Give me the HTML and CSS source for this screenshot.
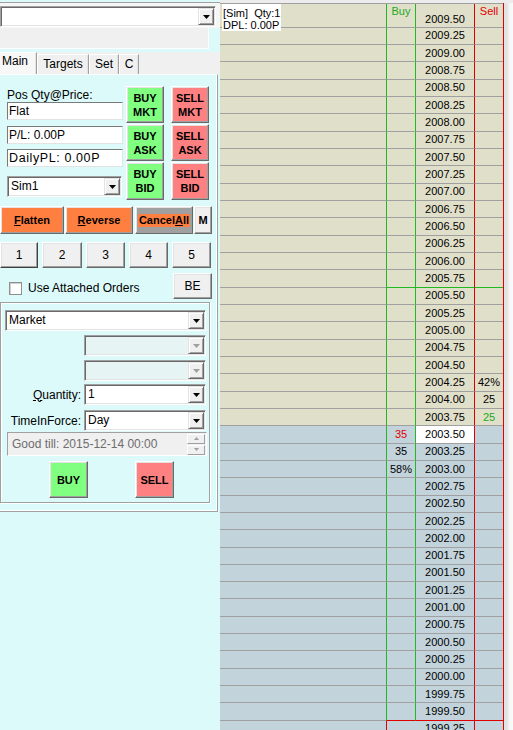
FILE: index.html
```html
<!DOCTYPE html>
<html>
<head>
<meta charset="utf-8">
<title>DOM</title>
<link rel="stylesheet" href="styles.css">
</head>
<body>
<div class="app">
  <div class="left">
    <div class="topbar">
      <div class="combo topcombo"><span class="val"></span><span class="arrow"><svg width="7" height="4" viewBox="0 0 7 4"><path d="M0 0h7L3.5 4z"/></svg></span></div>
    </div>
    <div class="greybox"></div>
    <div class="tabs">
      <div class="tab sel">Main</div>
      <div class="tab t2">Targets</div>
      <div class="tab t3">Set</div>
      <div class="tab t4">C</div>
    </div>
    <div class="page">
      <div class="sec1">
        <div class="poscol">
          <div class="lbl">Pos Qty@Price:</div>
          <div class="tb">Flat</div>
          <div class="tb mt6">P/L: 0.00P</div>
          <div class="tb mt5 wide">DailyPL: 0.00P</div>
          <div class="combo sim"><span class="val">Sim1</span><span class="arrow"><svg width="7" height="4" viewBox="0 0 7 4"><path d="M0 0h7L3.5 4z"/></svg></span></div>
        </div>
        <div class="btncol c1">
          <div class="btn buy h37">BUY<br>MKT</div>
          <div class="btn buy h37">BUY<br>ASK</div>
          <div class="btn buy h38">BUY<br>BID</div>
        </div>
        <div class="btncol c2">
          <div class="btn sell h37">SELL<br>MKT</div>
          <div class="btn sell h37">SELL<br>ASK</div>
          <div class="btn sell h38">SELL<br>BID</div>
        </div>
      </div>
      <div class="actrow">
        <div class="btn orange flat"><span><u>F</u>latten</span></div>
        <div class="btn orange rev"><span><u>R</u>everse</span></div>
        <div class="btn grey cancel"><span class="hl">Cancel<u>A</u>ll</span></div>
        <div class="btn face mbtn">M</div>
      </div>
      <div class="numrow">
        <div class="btn face num n1 def">1</div>
        <div class="btn face num n2">2</div>
        <div class="btn face num n3">3</div>
        <div class="btn face num n4">4</div>
        <div class="btn face num n5">5</div>
      </div>
      <div class="attrow">
        <span class="chk"></span>
        <span class="chklbl">Use Attached Orders</span>
        <div class="btn face be">BE</div>
      </div>
      <div class="group">
        <div class="combo market"><span class="val">Market</span><span class="arrow"><svg width="7" height="4" viewBox="0 0 7 4"><path d="M0 0h7L3.5 4z"/></svg></span></div>
        <div class="combo dis sub mt4"><span class="val"></span><span class="arrow"><svg width="7" height="4" viewBox="0 0 7 4"><path d="M0 0h7L3.5 4z"/></svg></span></div>
        <div class="combo dis sub mt4"><span class="val"></span><span class="arrow"><svg width="7" height="4" viewBox="0 0 7 4"><path d="M0 0h7L3.5 4z"/></svg></span></div>
        <div class="frow mt3">
          <span class="flbl"><u>Q</u>uantity:</span>
          <div class="combo fcombo"><span class="val">1</span><span class="arrow"><svg width="7" height="4" viewBox="0 0 7 4"><path d="M0 0h7L3.5 4z"/></svg></span></div>
        </div>
        <div class="frow mt5">
          <span class="flbl">TimeInForce:</span>
          <div class="combo fcombo"><span class="val">Day</span><span class="arrow"><svg width="7" height="4" viewBox="0 0 7 4"><path d="M0 0h7L3.5 4z"/></svg></span></div>
        </div>
        <div class="goodtill">
          <span class="gtxt">Good till: 2015-12-14 00:00</span>
          <span class="spin">
            <span class="sp"><svg width="5" height="3" viewBox="0 0 5 3"><path d="M0 3h5L2.5 0z"/></svg></span>
            <span class="sp"><svg width="5" height="3" viewBox="0 0 5 3"><path d="M0 0h5L2.5 3z"/></svg></span>
          </span>
        </div>
        <div class="orow">
          <div class="btn buy obuy">BUY</div>
          <div class="btn sell osell">SELL</div>
        </div>
      </div>
    </div>
  </div>

  <div class="ladder">
    <div class="grid">
      <div class="row hdr"><span class="c l"></span><span class="c b"><span class="hb">Buy</span></span><span class="c p">2009.50</span><span class="c s"><span class="hs">Sell</span></span></div>
      <div class="row"><span class="c l"></span><span class="c b"></span><span class="c p">2009.25</span><span class="c s"></span></div>
      <div class="row"><span class="c l"></span><span class="c b"></span><span class="c p">2009.00</span><span class="c s"></span></div>
      <div class="row"><span class="c l"></span><span class="c b"></span><span class="c p">2008.75</span><span class="c s"></span></div>
      <div class="row"><span class="c l"></span><span class="c b"></span><span class="c p">2008.50</span><span class="c s"></span></div>
      <div class="row"><span class="c l"></span><span class="c b"></span><span class="c p">2008.25</span><span class="c s"></span></div>
      <div class="row"><span class="c l"></span><span class="c b"></span><span class="c p">2008.00</span><span class="c s"></span></div>
      <div class="row"><span class="c l"></span><span class="c b"></span><span class="c p">2007.75</span><span class="c s"></span></div>
      <div class="row"><span class="c l"></span><span class="c b"></span><span class="c p">2007.50</span><span class="c s"></span></div>
      <div class="row"><span class="c l"></span><span class="c b"></span><span class="c p">2007.25</span><span class="c s"></span></div>
      <div class="row"><span class="c l"></span><span class="c b"></span><span class="c p">2007.00</span><span class="c s"></span></div>
      <div class="row"><span class="c l"></span><span class="c b"></span><span class="c p">2006.75</span><span class="c s"></span></div>
      <div class="row"><span class="c l"></span><span class="c b"></span><span class="c p">2006.50</span><span class="c s"></span></div>
      <div class="row"><span class="c l"></span><span class="c b"></span><span class="c p">2006.25</span><span class="c s"></span></div>
      <div class="row"><span class="c l"></span><span class="c b"></span><span class="c p">2006.00</span><span class="c s"></span></div>
      <div class="row gline"><span class="c l"></span><span class="c b"></span><span class="c p">2005.75</span><span class="c s"></span></div>
      <div class="row"><span class="c l"></span><span class="c b"></span><span class="c p">2005.50</span><span class="c s"></span></div>
      <div class="row"><span class="c l"></span><span class="c b"></span><span class="c p">2005.25</span><span class="c s"></span></div>
      <div class="row"><span class="c l"></span><span class="c b"></span><span class="c p">2005.00</span><span class="c s"></span></div>
      <div class="row"><span class="c l"></span><span class="c b"></span><span class="c p">2004.75</span><span class="c s"></span></div>
      <div class="row"><span class="c l"></span><span class="c b"></span><span class="c p">2004.50</span><span class="c s"></span></div>
      <div class="row"><span class="c l"></span><span class="c b"></span><span class="c p">2004.25</span><span class="c s">42%</span></div>
      <div class="row"><span class="c l"></span><span class="c b"></span><span class="c p">2004.00</span><span class="c s">25</span></div>
      <div class="row"><span class="c l"></span><span class="c b"></span><span class="c p">2003.75</span><span class="c s green">25</span></div>
      <div class="row lo"><span class="c l"></span><span class="c b red">35</span><span class="c p cur">2003.50</span><span class="c s"></span></div>
      <div class="row lo"><span class="c l"></span><span class="c b">35</span><span class="c p">2003.25</span><span class="c s"></span></div>
      <div class="row lo"><span class="c l"></span><span class="c b">58%</span><span class="c p">2003.00</span><span class="c s"></span></div>
      <div class="row lo"><span class="c l"></span><span class="c b"></span><span class="c p">2002.75</span><span class="c s"></span></div>
      <div class="row lo"><span class="c l"></span><span class="c b"></span><span class="c p">2002.50</span><span class="c s"></span></div>
      <div class="row lo"><span class="c l"></span><span class="c b"></span><span class="c p">2002.25</span><span class="c s"></span></div>
      <div class="row lo"><span class="c l"></span><span class="c b"></span><span class="c p">2002.00</span><span class="c s"></span></div>
      <div class="row lo"><span class="c l"></span><span class="c b"></span><span class="c p">2001.75</span><span class="c s"></span></div>
      <div class="row lo"><span class="c l"></span><span class="c b"></span><span class="c p">2001.50</span><span class="c s"></span></div>
      <div class="row lo"><span class="c l"></span><span class="c b"></span><span class="c p">2001.25</span><span class="c s"></span></div>
      <div class="row lo"><span class="c l"></span><span class="c b"></span><span class="c p">2001.00</span><span class="c s"></span></div>
      <div class="row lo"><span class="c l"></span><span class="c b"></span><span class="c p">2000.75</span><span class="c s"></span></div>
      <div class="row lo"><span class="c l"></span><span class="c b"></span><span class="c p">2000.50</span><span class="c s"></span></div>
      <div class="row lo"><span class="c l"></span><span class="c b"></span><span class="c p">2000.25</span><span class="c s"></span></div>
      <div class="row lo"><span class="c l"></span><span class="c b"></span><span class="c p">2000.00</span><span class="c s"></span></div>
      <div class="row lo"><span class="c l"></span><span class="c b"></span><span class="c p">1999.75</span><span class="c s"></span></div>
      <div class="row lo rline"><span class="c l"></span><span class="c b"></span><span class="c p">1999.50</span><span class="c s"></span></div>
      <div class="row lo after"><span class="c l"></span><span class="c b"></span><span class="c p">1999.25</span><span class="c s"></span></div>
    </div>
    <div class="strip"></div>
    <div class="info">[Sim]  Qty:1<br>DPL: 0.00P</div>
  </div>
</div>
</body>
</html>
```

FILE: styles.css
```css
* { box-sizing: border-box; }
html, body { margin: 0; padding: 0; }
body {
  width: 513px;
  height: 730px;
  overflow: hidden;
  background: #f0f0f0;
  font-family: "Liberation Sans", Arial, sans-serif;
  font-size: 12px;
  color: #000;
}
.app { display: flex; height: 730px; }

/* ---------- left panel ---------- */
.left {
  width: 220px;
  flex: none;
  background: #dcfafa;
  display: flex;
  flex-direction: column;
}
.topbar {
  height: 26px;
  margin-top: 2px;
  border-top: 1px solid #a0a0a0;
  background: #f6f6f6;
  padding-top: 3px;
}
.combo {
  display: flex;
  height: 21px;
  background: #fff;
  border: 1px solid;
  border-color: #a0a0a0 #fff #fff #a0a0a0;
  box-shadow: inset 1px 1px 0 #696969, inset -1px -1px 0 #e3e3e3;
}
.combo .val {
  flex: 1;
  padding-left: 3px;
  line-height: 19px;
  white-space: nowrap;
}
.combo .arrow {
  width: 16px;
  margin: 1px 1px 1px 0;
  background: #f0f0f0;
  border: 1px solid;
  border-color: #e3e3e3 #696969 #696969 #e3e3e3;
  box-shadow: inset 1px 1px 0 #fff, inset -1px -1px 0 #a0a0a0;
  display: flex;
  align-items: center;
  justify-content: center;
}
.combo .arrow svg { fill: #000; display: block; }
.combo.dis { background: #e6f4f4; }
.combo.dis .arrow svg { fill: #a0a0a0; }
.topcombo { width: 216px; }

.greybox {
  width: 209px;
  height: 21px;
  background: #f0f0f0;
  border-right: 1px solid #fff;
  border-bottom: 1px solid #fff;
}
.tabs {
  margin-top: 3px;
  height: 22px;
  background: #f0f0f0;
  display: flex;
  align-items: flex-end;
}
.tab {
  height: 20px;
  line-height: 17px;
  padding-top: 1px;
  border-left: 1px solid #fff;
  border-top: 1px solid #fff;
  border-right: 1px solid #a0a0a0;
  box-shadow: inset -1px 0 0 #e3e3e3;
  text-align: center;
  white-space: nowrap;
}
.tab.sel {
  height: 22px;
  width: 37px;
  padding-top: 0;
  line-height: 17px;
  padding-left: 2px;
  text-align: left;
  border-left: none;
  background: #f7f7f7;
}
.tab.t2 { width: 52px; }
.tab.t3 { width: 30px; }
.tab.t4 { width: 20px; }

.page {
  width: 218px;
  height: 438px;
  border-top: 1px solid #fff;
  border-right: 1px solid #a0a0a0;
  border-bottom: 1px solid #a0a0a0;
  box-shadow: inset -1px -1px 0 #fff;
  background: #dcfafa;
  padding-top: 11px;
}

.sec1 { display: flex; height: 114px; }
.poscol { width: 116px; margin-left: 7px; display: flex; flex-direction: column; }
.lbl { height: 16px; line-height: 14px; padding-top: 2px; white-space: nowrap; }
.tb {
  height: 18px;
  background: #fff;
  border: 1px solid;
  border-color: #7a7a7a #e3e3e3 #e3e3e3 #7a7a7a;
  line-height: 16px;
  padding-left: 1px;
  white-space: nowrap;
  overflow: hidden;
}
.tb.wide { letter-spacing: 0.6px; font-size: 12.5px; }
.mt6 { margin-top: 6px; }
.mt5 { margin-top: 5px; }
.mt4 { margin-top: 4px; }
.mt3 { margin-top: 3px; }
.sim { width: 115px; margin-top: 9px; }

.btncol { width: 38px; display: flex; flex-direction: column; gap: 1px; }
.btncol.c1 { margin-left: 3px; }
.btncol.c2 { margin-left: 7px; }
.h37 { height: 37px; }
.h38 { height: 38px; }

.btn {
  border: 1px solid;
  border-color: #fff #696969 #696969 #fff;
  box-shadow: inset -1px -1px 0 #a0a0a0, inset 1px 1px 0 #e3e3e3;
  display: flex;
  align-items: center;
  justify-content: center;
  text-align: center;
  white-space: nowrap;
}
.buy, .sell, .orange, .grey, .mbtn {
  font-weight: bold;
  font-size: 11px;
  line-height: 14px;
}
.buy { background: #80ff80; }
.sell { background: #ff8080; }
.orange { background: #ff7f40; }
.grey { background: #a0a0a0; }
.face { background: #f0f0f0; }
.hl { background: #ff7f40; padding: 0 1px; line-height: 13px; }

.actrow { display: flex; height: 28px; margin-top: 6px; }
.flat { width: 64px; }
.rev { width: 68px; margin-left: 1px; }
.cancel { width: 58px; margin-left: 2px; }
.mbtn { width: 18px; margin-left: 1px; }

.numrow { display: flex; height: 26px; margin-top: 8px; gap: 4px; }
.num { width: 39px; }
.n1 { width: 38px; }
.n2 { width: 40px; }
.def { border-color: #fff #404040 #404040 #fff; }

.attrow { display: flex; align-items: center; height: 26px; margin-top: 5px; }
.chk {
  width: 13px;
  height: 13px;
  margin-left: 9px;
  margin-top: 4px;
  background: #fff;
  border: 1px solid #8e8f8f;
  box-shadow: inset 1px 1px 0 #d0d0d0;
}
.chklbl { margin-left: 6px; margin-top: 3px; }
.be { width: 39px; height: 26px; margin-left: auto; margin-right: 5px; }

.group {
  width: 210px;
  height: 201px;
  margin-top: 3px;
  border: 1px solid #a0a0a0;
  box-shadow: 1px 1px 0 #fff, inset 1px 1px 0 #fff;
  padding: 7px 0 0 4px;
}
.market { width: 201px; }
.sub { width: 122px; margin-left: 79px; }
.frow { display: flex; align-items: center; }
.flbl { width: 76px; text-align: right; margin-right: 3px; white-space: nowrap; }
.fcombo { width: 122px; }
.goodtill {
  width: 200px;
  height: 24px;
  margin: 1px 0 0 2px;
  background: #f0f0f0;
  border: 1px solid;
  border-color: #a0a0a0 #fff #fff #a0a0a0;
  display: flex;
  align-items: center;
}
.gtxt { flex: 1; color: #6d6d6d; padding-left: 4px; white-space: nowrap; }
.spin { width: 18px; height: 22px; display: flex; flex-direction: column; justify-content: center; gap: 1px; margin-right: 1px; }
.sp {
  height: 10px;
  background: #f0f0f0;
  border: 1px solid;
  border-color: #fff #a0a0a0 #a0a0a0 #fff;
  display: flex;
  align-items: center;
  justify-content: center;
}
.sp svg { fill: #a0a0a0; display: block; }
.orow { display: flex; margin-top: 5px; }
.obuy { width: 39px; height: 37px; margin-left: 44px; }
.osell { width: 39px; height: 37px; margin-left: 47px; }

/* ---------- ladder ---------- */
.ladder {
  position: relative;
  flex: none;
  width: 293px;
  display: flex;
  padding-top: 3px;
  background: #ececec;
}
.grid {
  width: 283px;
  border-top: 1px solid #a0a0a0;
  font-size: 11px;
}
.row {
  display: grid;
  grid-template-columns: 166px 29px 59px 29px;
  height: 17.333px;
  background: #e0dfc9;
}
.row.lo { background: #c2d3db; }
.row.hdr { height: 23.667px; }
.c {
  border-bottom: 1px solid #a0a0a0;
  display: flex;
  align-items: center;
  justify-content: center;
  white-space: nowrap;
  line-height: 13px;
}
.c.b { border-left: 1px solid #22b822; }
.c.p { border-left: 1px solid #22b822; }
.c.s { border-left: 1px solid #e00000; }
.hdr .c.p { align-items: flex-end; padding-bottom: 1px; }
.hdr .c.b, .hdr .c.s { align-items: flex-start; padding-top: 1px; }
.hb { color: #22aa22; }
.hs { color: #e00000; }
.c.cur { background: #fff; }
.green { color: #22aa22; }
.red { color: #e00000; }
.gline .c.b, .gline .c.p, .gline .c.s { border-bottom-color: #22b822; }
.rline .c.b, .rline .c.p, .rline .c.s { border-bottom-color: #e00000; }
.after .c.b { border-left-color: #e00000; }
.after .c.p { border-left-color: #c2d3db; }

.strip {
  width: 10px;
  border-left: 1px solid #e00000;
  background: linear-gradient(to right, #e2e2e2 0, #e2e2e2 30%, #f4f4f4 60%, #fbfbfb 100%);
}
.info {
  position: absolute;
  left: 2px;
  top: 4px;
  height: 27px;
  background: #fff;
  padding: 3px 1px 0 1px;
  line-height: 12px;
  font-size: 11px;
  white-space: pre;
}
```
